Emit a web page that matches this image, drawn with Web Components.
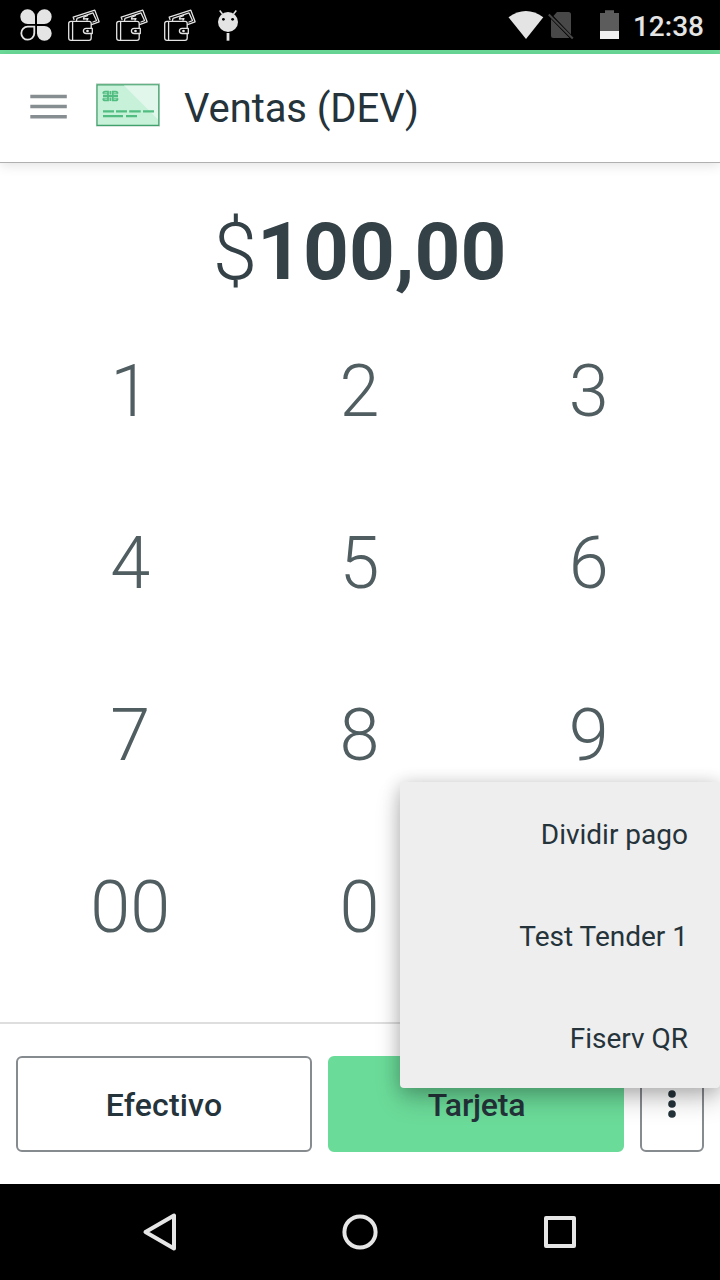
<!DOCTYPE html>
<html lang="es">
<head>
<meta charset="utf-8">
<title>Ventas (DEV)</title>
<style>
html, body { margin: 0; height: 100%; background: #fff; overflow: hidden; font-family: Roboto, sans-serif; color: #25333a; }
</style>
</head>
<body>
<pos-app></pos-app>
<script>
function define(name, html) {
  const t = document.createElement('template');
  t.innerHTML = html;
  customElements.define(name, class extends HTMLElement {
    constructor() {
      super();
      this.attachShadow({ mode: 'open' }).appendChild(t.content.cloneNode(true));
    }
  });
}

define('wallet-icon', `
<style>:host{display:block;width:48px;height:50px} svg{display:block}</style>
<svg width="48" height="50" viewBox="60 0 48 50" fill="none" stroke="#e4e4e4" stroke-width="1.3" stroke-linejoin="round" stroke-linecap="round">
<path d="M74 19.5 73.2 17.2 94.8 10.2 99.1 21.8 91.5 24.6"/>
<path d="M76.5 20.5 77 18.3 93 12.9 96.5 20.6 93 22"/>
<path d="M87.5 15.6 84 17 83.5 19 88 18.6 87 20.2"/>
<path d="M91.2 28V23.4Q91.2 21.3 89 21.3H71Q68.7 21.3 68.7 23.5V38Q68.7 40.3 71 40.3H89Q91.2 40.3 91.2 38V34M72.6 21.5V40"/>
<path d="M92.3 28.4H86.2Q83.4 28.6 83.4 31T86.2 33.5H92.3Z"/><circle cx="87.5" cy="31" r=".7"/>
</svg>`);

define('status-bar', `
<style>
:host{display:flex;height:50px;background:#000;border-bottom:4px solid #6bdb99;justify-content:space-between;color:#e4e4e4}
.g{display:flex;align-items:center} svg{display:block}
.t{font-size:28px;line-height:50px;font-weight:500;padding:2px 16px 0 0;height:50px;box-sizing:border-box}
</style>
<div class="g">
<svg width="60" height="50" fill="#e4e4e4">
<path d="M35 24V16.3A7.35 7.35 0 1 0 27.7 24ZM37 24V16.3A7.35 7.35 0 1 1 44.3 24ZM37 26V33.6A7.35 7.35 0 1 0 44.3 26Z"/>
<path d="M34.3 26.7V33.4A6.5 6.5 0 1 1 27.7 26.7Z" fill="none" stroke="#e4e4e4" stroke-width="1.8"/>
</svg>
<wallet-icon></wallet-icon><wallet-icon></wallet-icon><wallet-icon></wallet-icon>
<svg width="48" height="50" viewBox="204 0 48 50"><circle cx="228" cy="22" r="10" fill="#e4e4e4"/><path d="M222.5 14 219.7 10.5M233.5 14 236.3 10.5" stroke="#e4e4e4" stroke-width="1.5"/><path d="M226.6 33h2.8v7.7h-2.8z" fill="#e4e4e4"/><circle cx="223.4" cy="19.3" r="1.4"/><circle cx="232.6" cy="19.3" r="1.4"/></svg>
</div>
<div class="g">
<svg width="134" height="50" viewBox="499 0 134 50">
<path d="M508.5 17.2Q525.9 4.8 543.3 17.2L526 39Z" fill="#e4e4e4"/>
<path d="M557 12h11.5q2.5 0 2.5 2.5V34.5L553.4 16ZM551 19 569.5 38H553.5Q551 38 551 35.5Z" fill="#484848"/>
<path d="M548.8 14.5 572.8 38.5" stroke="#484848" stroke-width="2"/>
<path d="M600 13h5v-2.7h9V13h5v18h-19z" fill="#5c5c5c"/><path d="M600 31h19v8h-19z" fill="#f0f0f0"/>
</svg><div class="t">12:38</div>
</div>`);

define('app-header', `
<style>
:host{display:flex;height:109px;box-sizing:border-box;align-items:center;background:#fff;border-bottom:1px solid #b0b0b0;box-shadow:0 2px 12px rgba(0,0,0,.12);position:relative}
svg{display:block} h1{margin:0;font-size:40px;font-weight:400;line-height:48px;padding:1px 0 0 24px;letter-spacing:-.08px}
</style>
<svg width="96" height="108" viewBox="0 54 96 108"><path d="M30.3 96.6H66.8M30.3 106.6H66.8M30.3 116.7H66.8" stroke="#868e91" stroke-width="3.5"/></svg>
<svg width="64" height="108" viewBox="96 54 64 108">
<path d="M96 83h64v43.8H96z" fill="#cfddd5"/><path d="M97 84.8h61.8v40.6H97z" fill="#c7f1d9" stroke="#41a16c" stroke-width="1.2"/>
<path d="M124 85.6h34v33.8z" fill="#e1f7eb"/>
<g stroke="#52bd80" fill="none"><path d="M103 111.4h11M116 111.4h11M129.2 111.4h11.5M143 111.4h11M103 116.2h20M126 116.2h11" stroke-width="2.3"/>
<path d="M103.2 93.6q0-2 2-2h2.8v8.8h-2.8q-2 0-2-2M117.6 93.6q0-2-2-2h-2.8v8.8h2.8q2 0 2-2M103 96h5M108 96h5M113 96h5M110.4 91v3.4M110.4 97.6v3.4" stroke-width="1.8"/><path d="M103 93.8h4.5M113.5 93.8h4.5M103 98.2h4.5M113.5 98.2h4.5" stroke-width="1"/></g>
</svg>
<h1><slot></slot></h1>`);

define('amount-display', `
<style>:host{display:block;height:142px;font-size:80px;padding-top:18px;box-sizing:border-box;text-align:center;font-weight:300;color:#344147} ::slotted(b){font-weight:700} div{height:124px;line-height:143px;padding-right:1px}</style><div><slot></slot></div>`);

define('key-pad', `
<style>:host{display:grid;grid-template-columns:repeat(3,1fr);grid-auto-rows:172px;padding:1px 16.5px 0 15.5px;height:717px;box-sizing:border-box}</style><slot></slot>`);
define('pad-key', `
<style>:host{display:flex;align-items:center;justify-content:center;font-size:72px;line-height:84px;font-weight:300;color:#505d61}</style><slot></slot>`);

define('pay-button', `
<style>
:host{display:flex;flex:1;align-items:center;justify-content:center;box-sizing:border-box;height:96px;border:2px solid #868b8f;border-radius:6px;font-size:32px;font-weight:500;background:#fff;letter-spacing:.15px}
span{padding-top:2px}
:host([primary]){background:#6bdb99;border-color:#6bdb99;letter-spacing:-.2px}
:host([primary]) span{padding-left:1px}
:host([compact]){flex:0 0 64px}
:host([compact]) span{padding:0}
</style><span><slot></slot></span>`);
define('more-icon', `
<style>:host{display:block} svg{display:block}</style><svg width="8" height="28"><g fill="#25333a"><circle cx="4" cy="4" r="3.8"/><circle cx="4" cy="14" r="3.8"/><circle cx="4" cy="24" r="3.8"/></g></svg>`);
define('pay-bar', `
<style>:host{display:flex;gap:16px;height:162px;box-sizing:border-box;border-top:2px solid #dedede;padding:32px 16px;background:#fff}</style><slot></slot>`);

define('tender-menu', `
<style>:host{display:flex;flex-direction:column;position:absolute;right:0;top:782px;width:320px;height:306px;background:#eee;border-radius:4px;box-shadow:0 12px 26px rgba(0,0,0,.2),0 2px 18px rgba(0,0,0,.2)}</style><slot></slot>`);
define('menu-entry', `
<style>:host{display:flex;flex:1;align-items:center;justify-content:flex-end;padding-right:32px;font-size:28px;padding-top:2px;box-sizing:border-box}</style><slot></slot>`);

define('nav-bar', `
<style>:host{display:flex;height:96px;background:#000;position:relative;justify-content:center} svg{display:block}</style>
<svg width="720" height="96" viewBox="0 1184 720 96" fill="none" stroke="#e6e6e6" stroke-width="4" stroke-linejoin="round"><path d="M174 1215.5V1248.5L145.5 1232Z"/><circle cx="360" cy="1232" r="15.6"/><path d="M546 1218h28v28h-28z"/></svg>`);

define('pos-app', `
<style>:host{display:flex;flex-direction:column;width:720px;height:1280px;position:relative;overflow:hidden;background:#fff}</style>
<status-bar></status-bar>
<app-header>Ventas (DEV)</app-header>
<amount-display>$<b>100,00</b></amount-display>
<key-pad><pad-key>1</pad-key><pad-key>2</pad-key><pad-key>3</pad-key><pad-key>4</pad-key><pad-key>5</pad-key><pad-key>6</pad-key><pad-key>7</pad-key><pad-key>8</pad-key><pad-key>9</pad-key><pad-key>00</pad-key><pad-key>0</pad-key></key-pad>
<pay-bar><pay-button>Efectivo</pay-button><pay-button primary>Tarjeta</pay-button><pay-button compact><more-icon></more-icon></pay-button></pay-bar>
<tender-menu><menu-entry>Dividir pago</menu-entry><menu-entry>Test Tender 1</menu-entry><menu-entry>Fiserv QR</menu-entry></tender-menu>
<nav-bar></nav-bar>`);
</script>
</body>
</html>
